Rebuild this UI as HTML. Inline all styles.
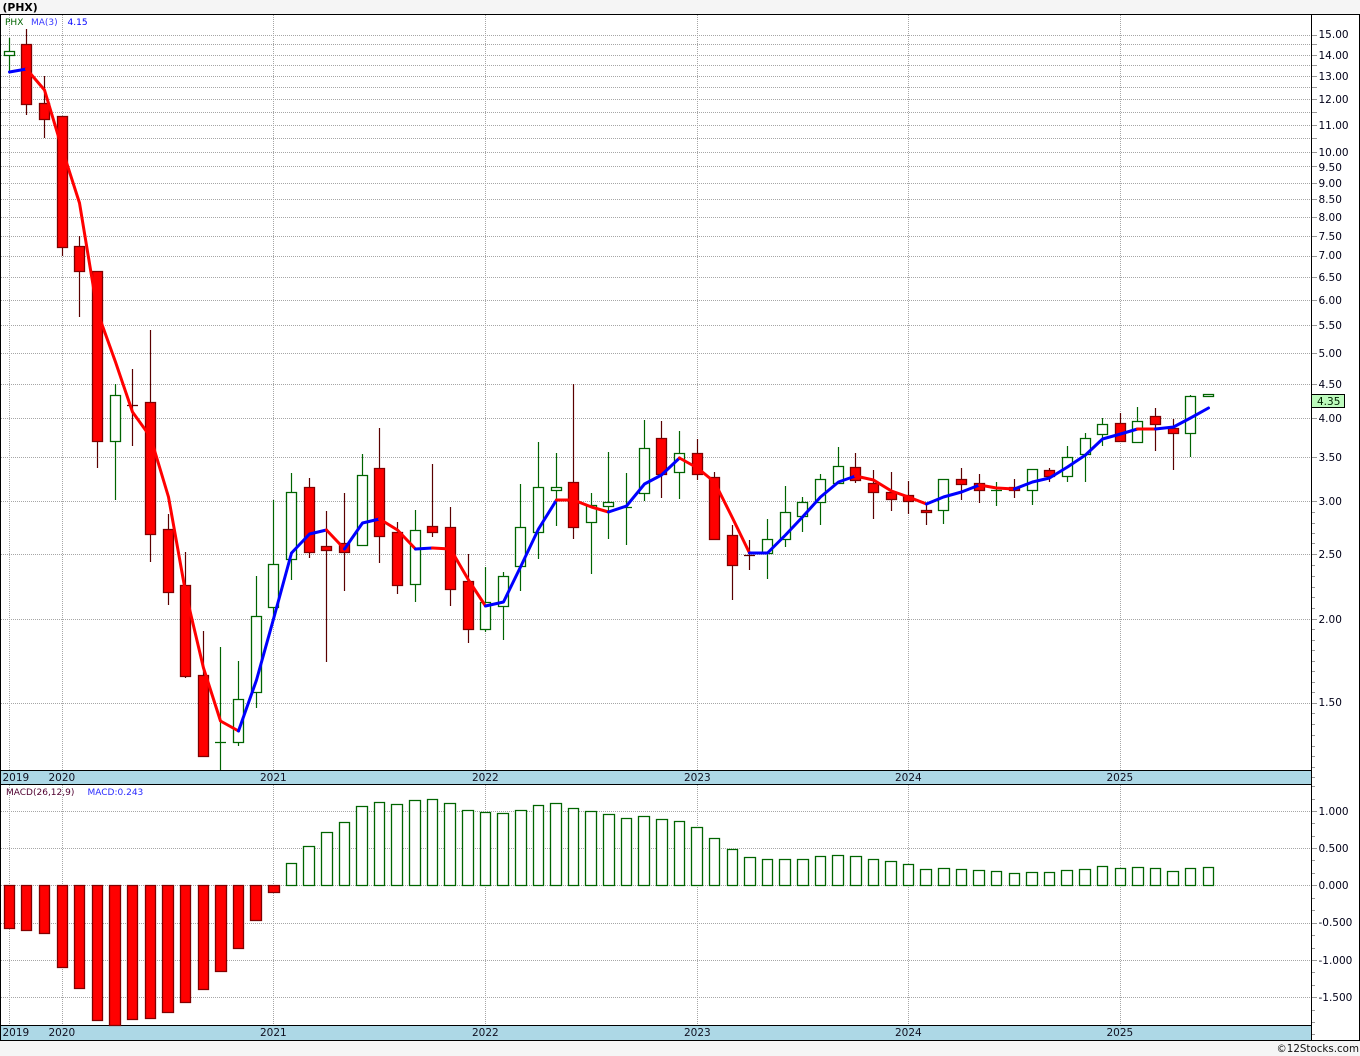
<!DOCTYPE html>
<html lang="en">
<head>
<meta charset="utf-8">
<title>(PHX)</title>
<style>
html,body{margin:0;padding:0;background:#fff}
svg{display:block;font-family:"DejaVu Sans","Liberation Sans",sans-serif}
</style>
</head>
<body>
<svg width="1360" height="1056" viewBox="0 0 1360 1056" xmlns="http://www.w3.org/2000/svg">
<rect width="1360" height="1056" fill="#fff"/>
<rect width="1360" height="14" fill="#f5f5f5"/>
<rect y="1041" width="1360" height="15" fill="#f5f5f5"/>

<!-- grid (anti-aliased so dots stay light) -->
<path stroke="#a6a6a6" stroke-width="1" stroke-dasharray="1 1" fill="none" shape-rendering="geometricPrecision" d="M1 35.5H1311M1 44.5H1311M1 55.5H1311M1 65.5H1311M1 76.5H1311M1 87.5H1311M1 99.5H1311M1 112.5H1311M1 125.5H1311M1 138.5H1311M1 152.5H1311M1 166.5H1311M1 183.5H1311M1 199.5H1311M1 217.5H1311M1 236.5H1311M1 256.5H1311M1 277.5H1311M1 300.5H1311M1 325.5H1311M1 353.5H1311M1 384.5H1311M1 418.5H1311M1 457.5H1311M1 501.5H1311M1 554.5H1311M1 619.5H1311M1 703.5H1311
M9.5 15V770M62.5 15V770M273.5 15V770M485.5 15V770M697.5 15V770M908.5 15V770M1120.5 15V770
M1 811.5H1311M1 848.5H1311M1 885.5H1311M1 923.5H1311M1 960.5H1311M1 997.5H1311
M9.5 785V1025M62.5 785V1025M273.5 785V1025M485.5 785V1025M697.5 785V1025M908.5 785V1025M1120.5 785V1025"/>

<g shape-rendering="crispEdges">
<!-- axis ticks -->
<path stroke="#999" stroke-width="1" fill="none" d="M1312 35.5h5M1312 44.5h5M1312 55.5h5M1312 65.5h5M1312 76.5h5M1312 87.5h5M1312 99.5h5M1312 112.5h5M1312 125.5h5M1312 138.5h5M1312 152.5h5M1312 166.5h5M1312 183.5h5M1312 199.5h5M1312 217.5h5M1312 236.5h5M1312 256.5h5M1312 277.5h5M1312 300.5h5M1312 325.5h5M1312 353.5h5M1312 384.5h5M1312 418.5h5M1312 457.5h5M1312 501.5h5M1312 554.5h5M1312 619.5h5M1312 703.5h5
M1312 512.5h3M1312 523.5h3M1312 533.5h3M1312 543.5h3M1312 565.5h3M1312 576.5h3M1312 587.5h3M1312 597.5h3M1312 608.5h3M1312 629.5h3M1312 640.5h3M1312 650.5h3M1312 661.5h3M1312 671.5h3M1312 682.5h3M1312 692.5h3M1312 713.5h3M1312 724.5h3M1312 735.5h3M1312 746.5h3M1312 756.5h3M1312 767.5h3M1312 777.5h3
M1312 786.5h3M1312 799.5h3M1312 811.5h5M1312 823.5h3M1312 836.5h3M1312 848.5h5M1312 860.5h3M1312 873.5h3M1312 885.5h5M1312 898.5h3M1312 910.5h3M1312 923.5h5M1312 935.5h3M1312 948.5h3M1312 960.5h5M1312 972.5h3M1312 985.5h3M1312 997.5h5M1312 1010.5h3M1312 1022.5h3M1312 1034.5h3"/>

<!-- bands -->
<rect x="1" y="771" width="1310" height="13" fill="#add8e6"/>
<rect x="1" y="1026" width="1310" height="14" fill="#add8e6"/>
<path stroke="#000" stroke-width="1" fill="none" d="M0 14.5H1360M0 770.5H1311M0 784.5H1311M0 1025.5H1311M0 1040.5H1360M.5 14V1041M1311.5 14V1041M1359.5 14V1041"/>
</g>

<g shape-rendering="geometricPrecision">
<!-- green wicks -->
<path stroke="#006400" stroke-width="1.2" fill="none" d="M9.5 38V72M115.5 384V500M238.5 661V746M256.5 576V708M273.5 500V620M291.5 473V580M362.5 454V545M415.5 510V602M485.5 567V632M503.5 572V640M520.5 484V591M538.5 442V559M556.5 453V526M591.5 493V574M608.5 452V539M644.5 420V501M679.5 431V499M767.5 519V579M785.5 486V547M802.5 497V532M820.5 474V525M838.5 447V483M943.5 479V524M1032.5 469V505M1067.5 446V482M1085.5 433V482M1102.5 418V446M1137.5 407V443M1190.5 395V457
M220.5 647V770M626.5 473V545M996.5 482V506
M215 742.5h11M621 507.5h11M991 490.5h11"/>
<!-- red wicks -->
<path stroke="#5a0000" stroke-width="1.2" fill="none" d="M26.5 29V115M44.5 76V138M62.5 116V256M79.5 236V317M97.5 271V468M150.5 330V562M168.5 514V605M185.5 552V678M203.5 631V756M309.5 478V558M326.5 511V662M344.5 493V591M379.5 428V563M397.5 522V594M432.5 464V537M450.5 507V606M468.5 554V643M573.5 384V539M661.5 421V498M697.5 439V480M714.5 472V539M732.5 525V600M855.5 453V483M873.5 470V519M891.5 472V511M908.5 481V514M926.5 503V525M961.5 468V500M979.5 474V503M1014.5 479V498M1049.5 468V482M1120.5 413V441M1155.5 408V451M1173.5 419V470
M132.5 369V446M749.5 540V570
M127 405.5h11M744 555.5h11"/>
<!-- green bodies -->
<path fill="#fff" stroke="#006400" stroke-width="1.3" d="M4.5 51.5h10v4h-10zM110.5 395.5h10v46h-10zM233.5 699.5h10v43h-10zM251.5 616.5h10v76h-10zM268.5 564.5h10v43h-10zM286.5 492.5h10v67h-10zM357.5 475.5h10v70h-10zM410.5 530.5h10v54h-10zM480.5 602.5h10v27h-10zM498.5 576.5h10v30h-10zM515.5 527.5h10v39h-10zM533.5 487.5h10v45h-10zM551.5 487.5h10v3h-10zM586.5 505.5h10v17h-10zM603.5 502.5h10v4h-10zM639.5 448.5h10v45h-10zM674.5 453.5h10v19h-10zM762.5 539.5h10v14h-10zM780.5 512.5h10v27h-10zM797.5 502.5h10v14h-10zM815.5 479.5h10v23h-10zM833.5 466.5h10v17h-10zM938.5 479.5h10v31h-10zM1027.5 469.5h10v21h-10zM1062.5 457.5h10v19h-10zM1080.5 438.5h10v16h-10zM1097.5 424.5h10v10h-10zM1132.5 421.5h10v21h-10zM1185.5 396.5h10v37h-10zM1203.5 394.5h10v2h-10z"/>
<!-- red bodies -->
<path fill="#f00" stroke="#800000" stroke-width="1.3" d="M21.5 44.5h10v60h-10zM39.5 103.5h10v16h-10zM57.5 116.5h10v131h-10zM74.5 246.5h10v25h-10zM92.5 271.5h10v170h-10zM145.5 402.5h10v132h-10zM163.5 529.5h10v63h-10zM180.5 585.5h10v91h-10zM198.5 675.5h10v81h-10zM304.5 487.5h10v65h-10zM321.5 546.5h10v4h-10zM339.5 543.5h10v9h-10zM374.5 468.5h10v68h-10zM392.5 532.5h10v53h-10zM427.5 526.5h10v6h-10zM445.5 527.5h10v62h-10zM463.5 581.5h10v48h-10zM568.5 482.5h10v45h-10zM656.5 438.5h10v36h-10zM692.5 453.5h10v21h-10zM709.5 477.5h10v62h-10zM727.5 535.5h10v30h-10zM850.5 467.5h10v13h-10zM868.5 483.5h10v9h-10zM886.5 492.5h10v7h-10zM903.5 495.5h10v6h-10zM921.5 510.5h10v2h-10zM956.5 479.5h10v5h-10zM974.5 483.5h10v7h-10zM1009.5 487.5h10v3h-10zM1044.5 470.5h10v6h-10zM1115.5 423.5h10v18h-10zM1150.5 416.5h10v8h-10zM1168.5 428.5h10v5h-10z"/>

<!-- MACD red bars -->
<path fill="#f00" stroke="#800000" stroke-width="1.3" d="M4.5 885.5h10v43h-10zM21.5 885.5h10v45h-10zM39.5 885.5h10v48h-10zM57.5 885.5h10v82h-10zM74.5 885.5h10v103h-10zM92.5 885.5h10v135h-10zM109.5 885.5h11v140h-11zM127.5 885.5h10v134h-10zM145.5 885.5h10v133h-10zM162.5 885.5h11v127h-11zM180.5 885.5h10v117h-10zM198.5 885.5h10v104h-10zM215.5 885.5h11v86h-11zM233.5 885.5h10v63h-10zM250.5 885.5h11v35h-11zM268.5 885.5h11v7h-11z"/>
<!-- MACD green bars -->
<path fill="#fff" stroke="#006400" stroke-width="1.3" d="M286.5 863.5h10v22h-10zM303.5 846.5h11v39h-11zM321.5 832.5h11v53h-11zM339.5 822.5h10v63h-10zM356.5 806.5h11v79h-11zM374.5 802.5h10v83h-10zM391.5 804.5h11v81h-11zM409.5 800.5h11v85h-11zM427.5 799.5h10v86h-10zM444.5 803.5h11v82h-11zM462.5 810.5h11v75h-11zM480.5 812.5h10v73h-10zM497.5 813.5h11v72h-11zM515.5 810.5h11v75h-11zM533.5 805.5h10v80h-10zM550.5 803.5h11v82h-11zM568.5 808.5h10v77h-10zM585.5 811.5h11v74h-11zM603.5 814.5h11v71h-11zM621.5 818.5h10v67h-10zM638.5 816.5h11v69h-11zM656.5 819.5h11v66h-11zM674.5 821.5h10v64h-10zM691.5 827.5h11v58h-11zM709.5 838.5h10v47h-10zM727.5 849.5h10v36h-10zM744.5 857.5h11v28h-11zM762.5 859.5h10v26h-10zM779.5 859.5h11v26h-11zM797.5 859.5h11v26h-11zM815.5 856.5h10v29h-10zM832.5 855.5h11v30h-11zM850.5 856.5h11v29h-11zM868.5 859.5h10v26h-10zM885.5 861.5h11v24h-11zM903.5 864.5h10v21h-10zM920.5 869.5h11v16h-11zM938.5 868.5h11v17h-11zM956.5 869.5h10v16h-10zM973.5 870.5h11v15h-11zM991.5 871.5h10v14h-10zM1009.5 873.5h10v12h-10zM1026.5 872.5h11v13h-11zM1044.5 872.5h10v13h-10zM1061.5 870.5h11v15h-11zM1079.5 869.5h11v16h-11zM1097.5 866.5h10v19h-10zM1115.5 868.5h10v17h-10zM1132.5 867.5h11v18h-11zM1150.5 868.5h10v17h-10zM1167.5 871.5h11v14h-11zM1185.5 868.5h10v17h-10zM1203.5 867.5h10v18h-10z"/>
</g>

<!-- moving average -->
<g fill="none" stroke-width="3" stroke-linejoin="round" stroke-linecap="round">
<polyline stroke="#00f" points="9.5,72 26.5,69"/>
<polyline stroke="#f00" points="26.5,69 44.5,90 62.5,150 79.5,203 97.5,312 115.5,362 132.5,412 150.5,437 168.5,497 185.5,592 203.5,668 220.5,721 238.5,731"/>
<polyline stroke="#00f" points="238.5,731 256.5,680 273.5,619 291.5,553 309.5,534 326.5,530"/>
<polyline stroke="#f00" points="326.5,530 344.5,549"/>
<polyline stroke="#00f" points="344.5,549 362.5,523 379.5,519"/>
<polyline stroke="#f00" points="379.5,519 397.5,530 415.5,549"/>
<polyline stroke="#00f" points="415.5,549 432.5,548"/>
<polyline stroke="#f00" points="432.5,548 450.5,549 468.5,580 485.5,606"/>
<polyline stroke="#00f" points="485.5,606 503.5,602 520.5,567 538.5,529 556.5,500"/>
<polyline stroke="#f00" points="556.5,500 573.5,500 591.5,507 608.5,512"/>
<polyline stroke="#00f" points="608.5,512 626.5,506 644.5,484 661.5,475 679.5,458"/>
<polyline stroke="#f00" points="679.5,458 697.5,468 714.5,482 732.5,518 749.5,553"/>
<polyline stroke="#00f" points="749.5,553 767.5,553 785.5,535 802.5,517 820.5,497 838.5,482 855.5,476"/>
<polyline stroke="#f00" points="855.5,476 873.5,480 891.5,491 908.5,497 926.5,504"/>
<polyline stroke="#00f" points="926.5,504 943.5,497 961.5,492 979.5,485"/>
<polyline stroke="#f00" points="979.5,485 996.5,488 1014.5,489"/>
<polyline stroke="#00f" points="1014.5,489 1032.5,482 1049.5,478 1067.5,467 1085.5,455 1102.5,439 1120.5,434 1137.5,429"/>
<polyline stroke="#f00" points="1137.5,429 1155.5,429"/>
<polyline stroke="#00f" points="1155.5,429 1173.5,427 1190.5,418 1208.5,408"/>
</g>

<!-- title & legends -->
<text x="2.5" y="11" font-size="10.8" font-weight="bold" fill="#000">(PHX)</text>
<text x="5" y="25" font-size="9" fill="#006400">PHX</text>
<text x="31" y="25" font-size="9" fill="#3a3aff">MA(3)</text>
<text x="67.5" y="25" font-size="9" fill="#0000ff">4.15</text>
<text x="6" y="795" font-size="9" fill="#500030">MACD(26,12,9)</text>
<text x="87.5" y="795" font-size="9" fill="#2a2aff">MACD:0.243</text>

<!-- price axis labels -->
<g font-size="10.5" fill="#000018">
<text x="1318.5" y="38">15.00</text>
<text x="1318.5" y="59">14.00</text>
<text x="1318.5" y="80">13.00</text>
<text x="1318.5" y="103">12.00</text>
<text x="1318.5" y="129">11.00</text>
<text x="1318.5" y="156">10.00</text>
<text x="1318.5" y="171">9.50</text>
<text x="1318.5" y="187">9.00</text>
<text x="1318.5" y="203">8.50</text>
<text x="1318.5" y="221">8.00</text>
<text x="1318.5" y="240">7.50</text>
<text x="1318.5" y="259">7.00</text>
<text x="1318.5" y="281">6.50</text>
<text x="1318.5" y="304">6.00</text>
<text x="1318.5" y="329">5.50</text>
<text x="1318.5" y="357">5.00</text>
<text x="1318.5" y="388">4.50</text>
<text x="1318.5" y="422">4.00</text>
<text x="1318.5" y="461">3.50</text>
<text x="1318.5" y="505">3.00</text>
<text x="1318.5" y="558">2.50</text>
<text x="1318.5" y="623">2.00</text>
<text x="1318.5" y="706">1.50</text>
<text x="1318.5" y="815">1.000</text>
<text x="1318.5" y="852">0.500</text>
<text x="1318.5" y="889">0.000</text>
<text x="1318.5" y="926">-0.500</text>
<text x="1318.5" y="964">-1.000</text>
<text x="1318.5" y="1001">-1.500</text>
</g>

<!-- last price box -->
<rect x="1311.5" y="394.5" width="33" height="13" fill="#bdfbbd" stroke="#000" stroke-width="1" shape-rendering="crispEdges"/>
<text x="1317" y="405" font-size="10.5" fill="#002000">4.35</text>

<!-- year labels -->
<g font-size="10.5" fill="#101020">
<text x="2.5" y="781">2019</text><text x="48.5" y="781">2020</text><text x="260" y="781">2021</text><text x="472" y="781">2022</text><text x="684" y="781">2023</text><text x="895" y="781">2024</text><text x="1106.5" y="781">2025</text>
<text x="2.5" y="1036">2019</text><text x="48.5" y="1036">2020</text><text x="260" y="1036">2021</text><text x="472" y="1036">2022</text><text x="684" y="1036">2023</text><text x="895" y="1036">2024</text><text x="1106.5" y="1036">2025</text>
</g>

<text x="1359" y="1052" font-size="10.3" text-anchor="end" fill="#101010">©12Stocks.com</text>
</svg>
</body>
</html>
